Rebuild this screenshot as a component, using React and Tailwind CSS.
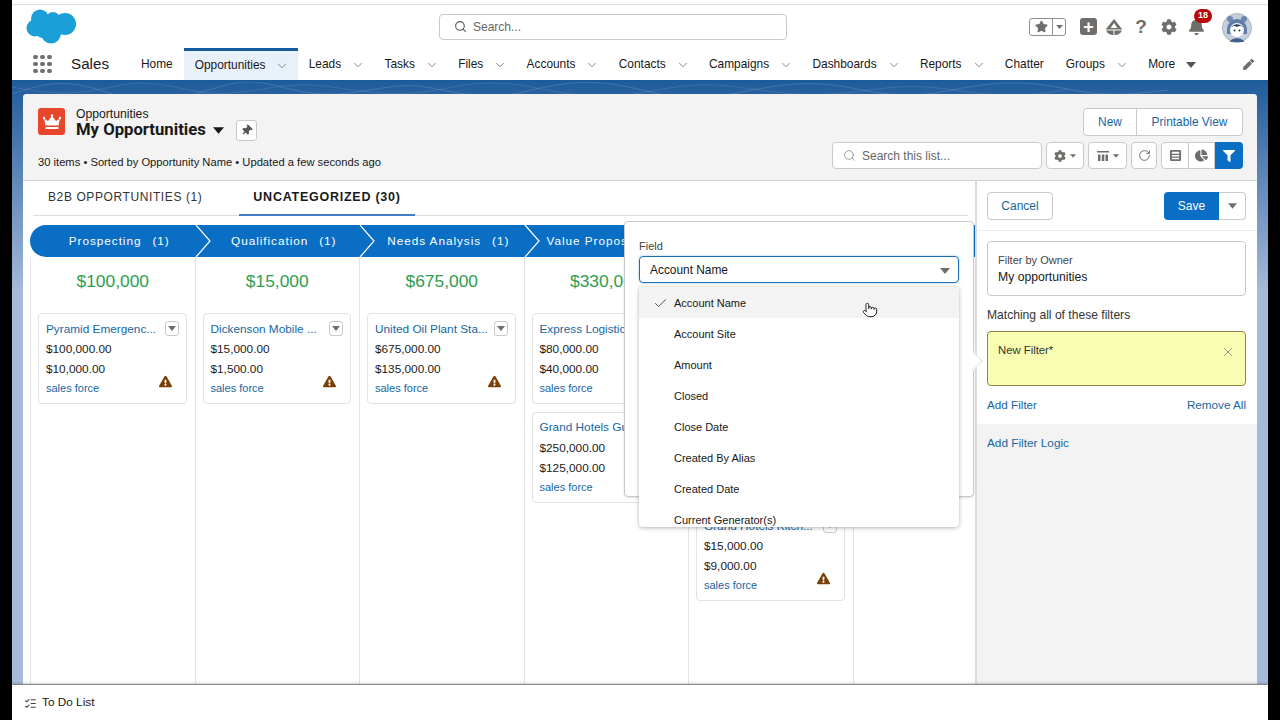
import React from "react";
import { ChevronDown, Search, RotateCw, Check, X, Pointer, ListChecks } from "lucide-react";
import { FaCog, FaBell, FaPen, FaThumbtack, FaChartPie, FaFilter, FaStar, FaExclamationTriangle } from "react-icons/fa";

const navItems = [
  { label: "Home" },
  { label: "Opportunities", menu: true, active: true },
  { label: "Leads", menu: true },
  { label: "Tasks", menu: true },
  { label: "Files", menu: true },
  { label: "Accounts", menu: true },
  { label: "Contacts", menu: true },
  { label: "Campaigns", menu: true },
  { label: "Dashboards", menu: true },
  { label: "Reports", menu: true },
  { label: "Chatter" },
  { label: "Groups", menu: true },
];

const stages = [
  {
    name: "Prospecting",
    count: 1,
    total: "$100,000",
    cards: [{ title: "Pyramid Emergenc...", amount: "$100,000.00", sub: "$10,000.00" }],
  },
  {
    name: "Qualification",
    count: 1,
    total: "$15,000",
    cards: [{ title: "Dickenson Mobile ...", amount: "$15,000.00", sub: "$1,500.00" }],
  },
  {
    name: "Needs Analysis",
    count: 1,
    total: "$675,000",
    cards: [{ title: "United Oil Plant Sta...", amount: "$675,000.00", sub: "$135,000.00" }],
  },
  {
    // the popover hides the rest of this label
    name: "Value Propos",
    clipped: true,
    total: "$330,000",
    cards: [
      { title: "Express Logistics...", amount: "$80,000.00", sub: "$40,000.00" },
      { title: "Grand Hotels Gu...", amount: "$250,000.00", sub: "$125,000.00" },
    ],
  },
  {
    // this column sits behind the field popover, only the last card shows
    name: "",
    total: "",
    cards: [
      { id: "a" },
      { id: "b" },
      { title: "Grand Hotels Kitch...", amount: "$15,000.00", sub: "$9,000.00" },
    ],
  },
];

const fields = [
  "Account Name",
  "Account Site",
  "Amount",
  "Closed",
  "Close Date",
  "Created By Alias",
  "Created Date",
  "Current Generator(s)",
];

function Caret({ className }) {
  return (
    <svg viewBox="0 0 10 6" className={className}>
      <path d="M0 0h10L5 6z" fill="currentColor" />
    </svg>
  );
}

function Cloud() {
  return (
    <svg viewBox="0 0 50 35" className="w-[50px] h-[35px]">
      <g fill="#1b9fd9">
        <circle cx="14" cy="9.500" r="9" />
        <circle cx="27" cy="10" r="7" />
        <circle cx="39" cy="15" r="11" />
        <circle cx="9" cy="19" r="8.500" />
        <circle cx="25" cy="24.500" r="10" />
        <circle cx="17" cy="21" r="8" />
        <rect x="10" y="10" width="30" height="14" />
      </g>
    </svg>
  );
}

function Waffle() {
  const dots = [0, 1, 2, 3, 4, 5, 6, 7, 8];
  return (
    <div className="grid grid-cols-3 gap-[2.500px] w-[19px]">
      {dots.map((d) => (
        <span key={d} className="w-[4.500px] h-[4.500px] rounded-full bg-[#706e6b]" />
      ))}
    </div>
  );
}

function Avatar() {
  return (
    <svg viewBox="0 0 30 30" className="w-[30px] h-[30px]">
      <circle cx="15" cy="15" r="14.500" fill="#c5cfdc" stroke="#a9b5c6" />
      <circle cx="8" cy="6" r="3" fill="#6d87ad" />
      <circle cx="22" cy="6" r="3" fill="#6d87ad" />
      <path d="M5 16a10 10 0 0 1 20 0v5H5z" fill="#5f7da8" />
      <circle cx="15" cy="17" r="7" fill="#fff" />
      <path d="M9 15c2-3 4-2 6-1 2-1 4-2 6 1-2-5-10-5-12 0z" fill="#2c3e5c" />
      <circle cx="12.500" cy="17.500" r="1" fill="#16325c" />
      <circle cx="17.500" cy="17.500" r="1" fill="#16325c" />
      <path d="M8 29c1-5 13-5 14 0z" fill="#3f5f8f" />
    </svg>
  );
}

function Trailhead() {
  return (
    <svg viewBox="0 0 18 18" className="w-[18px] h-[18px]">
      <path d="M9 1 1 11c0 4 4 6 8 6s8-2 8-6z" fill="#706e6b" />
      <path d="M9 5 5.500 10h7zM1 11.500h16v1H1zM8.500 12h1v5h-1z" fill="#fff" />
    </svg>
  );
}

function Crown() {
  return (
    <svg viewBox="0 0 20 20" className="w-[20px] h-[20px]">
      <path d="M2 6.500 6 9l4-5 4 5 4-2.500-1.500 7h-13z" fill="#fff" />
      <circle cx="2" cy="6" r="1.200" fill="#fff" />
      <circle cx="10" cy="3.500" r="1.200" fill="#fff" />
      <circle cx="18" cy="6" r="1.200" fill="#fff" />
      <rect x="3.500" y="15" width="13" height="2" fill="#fff" />
    </svg>
  );
}

function Contours() {
  return (
    <svg viewBox="0 0 1256 14" preserveAspectRatio="none" className="absolute left-0 top-0 w-[1256px] h-[14px]">
      <path
        d="M0 12c40-14 60-14 100 0s70 4 110-8 60 6 100 8 70-14 110-6 60 12 100 2 70-10 110 0 60 10 100 2 70-12 110-4 60 10 100 2 70-10 110-2 60 8 106 2"
        fill="none"
        stroke="#fff"
        strokeOpacity="0.14"
      />
      <path
        d="M0 5c50 10 70 6 110-2s70 12 110 8 60-12 100-6 70 10 110 2 60-8 100 0 70 10 110 2 60-8 100-2 70 8 110 2 60-6 100 0 70 6 106-2"
        fill="none"
        stroke="#fff"
        strokeOpacity="0.1"
      />
    </svg>
  );
}

function NavItem({ item }) {
  return (
    <div
      className={`h-full flex items-center pl-[11px] ${item.menu ? "pr-[8.300px]" : "pr-[11px]"} ${
        item.active ? "bg-[#e8f1fa] border-t-[3px] border-[#145c9e]" : "pt-[2px]"
      }`}
    >
      <span className="w-max">{item.label}</span>
      {item.menu && <ChevronDown className="ml-[10px] w-[14px] h-[14px] text-[#555]" strokeWidth={1.200} />}
    </div>
  );
}

function OpportunityCard({ card }) {
  if (!card.title) {
    return <div className="ml-[7px] mr-[8px] h-[91px] border border-[#e2e2e2] rounded-[4px] bg-white" />;
  }
  return (
    <div className="ml-[7px] mr-[8px] h-[91px] border border-[#e2e2e2] rounded-[4px] bg-white pl-[7px] pr-[7px] pt-[7px] text-[11.800px] leading-[20px] text-[#1a1a1a]">
      <div className="flex items-center justify-between h-[15px] mb-[3px]">
        <span className="text-[#17669f] text-[11.800px] whitespace-nowrap">{card.title}</span>
        <span className="w-[14px] h-[15px] shrink-0 border border-[#c9c9c9] rounded-[3px] flex items-center justify-center">
          <Caret className="w-[8px] h-[5px] text-[#706e6b]" />
        </span>
      </div>
      <div>{card.amount}</div>
      <div>{card.sub}</div>
      <div className="flex items-start justify-between pr-[7px] leading-[18px]">
        <span className="text-[#17669f] text-[11px]">sales force</span>
        <FaExclamationTriangle className="w-[13px] h-[13px] text-[#7a3f07] -mt-[4px]" />
      </div>
    </div>
  );
}

function Column({ stage }) {
  return (
    <div className="w-[164.500px] shrink-0 border-l border-[#e4e4e4]">
      <div className="h-[24px] text-[17.400px] leading-[24px] text-center text-[#2e9e4f] mt-[12px] mb-[20px]">{stage.total}</div>
      <div className="flex flex-col gap-[7.500px]">
        {stage.cards.map((c) => (
          <OpportunityCard key={c.title || c.id} card={c} />
        ))}
      </div>
    </div>
  );
}

function PathBar() {
  return (
    <div className="relative h-[32px] ml-[7px] bg-[#0b6ec5] rounded-l-full flex text-white text-[11.800px] tracking-[0.08em] overflow-hidden">
      {stages.map((s) => (
        <div
          key={s.name || "hidden"}
          className={`w-[164.500px] shrink-0 relative flex items-center gap-[11px] whitespace-nowrap pt-[1px] ${
            s.clipped ? "pl-[23px]" : "justify-center pl-[14px]"
          }`}
        >
          {s.name && <span>{s.name}</span>}
          {s.count && <span>({s.count})</span>}
          <svg viewBox="0 0 16 32" className="absolute right-[-16px] top-0 w-[16px] h-[32px] z-10">
            <path d="M1 0 15 16 1 32" fill="none" stroke="#fff" strokeWidth="1.200" />
          </svg>
        </div>
      ))}
    </div>
  );
}

function FieldPopover() {
  return (
    <div className="absolute left-[601px] top-[40px] w-[350px] h-[276px] bg-white border border-[#c9c9c9] rounded-[4px] shadow-sm z-20">
      <div className="pl-[14px] pr-[14px] pt-[17px]">
        <div className="text-[11px] leading-[14px] text-[#444] mb-[3px]">Field</div>
        <div className="h-[27px] w-[320px] border border-[#1b6fb8] rounded-[4px] flex items-center justify-between pl-[10px] pr-[8px] text-[11.900px] pt-[2px] shadow-[0_0_2px_#7fb2dd]">
          <span>Account Name</span>
          <Caret className="w-[10px] h-[6px] text-[#706e6b]" />
        </div>
      </div>
      <div className="absolute left-[14px] top-[65px] w-[320px] h-[240px] bg-white rounded-b-[4px] shadow-[0_1px_4px_rgba(0,0,0,0.3)] overflow-hidden text-[11px]">
        {fields.map((f, i) => (
          <div
            key={f}
            className={`h-[31px] flex items-center pl-[35px] pt-[2px] relative ${i === 0 ? "bg-[#f3f3f3]" : ""}`}
          >
            {i === 0 && <Check className="absolute left-[14px] w-[15px] h-[15px] text-[#444]" strokeWidth={1.500} />}
            {f}
          </div>
        ))}
      </div>
      <Pointer className="absolute left-[237px] top-[79px] w-[16px] h-[18px] z-30 text-[#222] fill-white" strokeWidth={1.500} />
      <div className="absolute right-[-7px] top-[132px] w-[14px] h-[14px] bg-white rotate-45 border-t border-r border-[#e5e5e5]" />
    </div>
  );
}

function FilterPanel() {
  return (
    <div className="w-[282px] shrink-0 border-l-2 border-[#dddddd] bg-[#f3f3f3] flex flex-col text-[12px]">
      <div className="bg-white h-[243px] flex flex-col">
        <div className="h-[50px] border-b border-[#eeeeee] flex items-center justify-between pl-[10px] pr-[11px] shrink-0">
          <button className="w-[66px] h-[28px] border border-[#c9c9c9] rounded-[4px] text-[#17669f]">Cancel</button>
          <div className="flex h-[28px]">
            <button className="w-[55px] bg-[#0b6ec5] text-white rounded-l-[4px]">Save</button>
            <span className="w-[27px] border border-l-0 border-[#c9c9c9] rounded-r-[4px] flex items-center justify-center">
              <Caret className="w-[9px] h-[6px] text-[#706e6b]" />
            </span>
          </div>
        </div>
        <div className="pl-[10px] pr-[11px] pt-[10px]">
          <div className="h-[55px] border border-[#c9c9c9] rounded-[4px] px-[10px] pt-[10px] leading-[17px]">
            <div className="text-[11px] text-[#444]">Filter by Owner</div>
            <div className="text-[12.200px] text-[#1a1a1a]">My opportunities</div>
          </div>
          <div className="mt-[11px] text-[12.100px] leading-[16px] text-[#333]">Matching all of these filters</div>
          <div className="mt-[8px] h-[55px] bg-[#f9fdb1] border border-[#8f8449] rounded-[4px] pl-[10px] pr-[10px] pt-[10px] flex justify-between text-[11.300px] text-[#333]">
            <span>New Filter*</span>
            <X className="w-[14px] h-[14px] text-[#888] mt-[3px]" strokeWidth={1.500} />
          </div>
          <div className="mt-[10px] flex justify-between text-[11.700px] text-[#17669f]">
            <span>Add Filter</span>
            <span>Remove All</span>
          </div>
        </div>
      </div>
      <div className="pl-[10px] pt-[11px] text-[11.800px] text-[#17669f]">Add Filter Logic</div>
    </div>
  );
}

export default function App() {
  return (
    <div className="h-[720px] w-[1280px] overflow-hidden flex bg-black text-[#181818] text-[11.900px]" style={{ fontFamily: '"Liberation Sans", Arial, sans-serif' }}>
      <div className="w-[1256px] ml-[12px] flex flex-col bg-white">
        <div className="h-[5px] shrink-0 border-b border-[#dedede]" />

        {/* top bar */}
        <div className="h-[43px] shrink-0 flex items-center pl-[14px] pr-[16px]">
          <Cloud />
          <div className="ml-[363px] w-[348px] h-[26px] border border-[#c9c9c9] rounded-[4px] flex items-center pl-[14px] text-[#666] text-[12px]">
            <Search className="w-[13px] h-[13px] mr-[6px] text-[#555]" strokeWidth={2} />
            Search...
          </div>
          <div className="ml-auto flex items-center text-[#706e6b]">
            <div className="flex h-[18px] w-[37px] border border-[#8f8f8f] rounded-[3px]">
              <span className="w-[23px] border-r border-[#8f8f8f] flex items-center justify-center">
                <FaStar className="w-[13px] h-[13px]" />
              </span>
              <span className="flex-1 flex items-center justify-center">
                <Caret className="w-[7px] h-[4px]" />
              </span>
            </div>
            <span className="ml-[14px] w-[17px] h-[17px] rounded-[3px] bg-[#706e6b] text-white flex items-center justify-center text-[18px] leading-none font-bold">+</span>
            <span className="ml-[8px]"><Trailhead /></span>
            <span className="ml-[12px] w-[12px] text-[19px] leading-none font-bold text-center">?</span>
            <FaCog className="ml-[14px] w-[16px] h-[16px]" />
            <span className="relative ml-[11px]">
              <FaBell className="w-[17px] h-[17px]" />
              <span className="absolute left-[6px] -top-[9px] w-[18px] h-[14px] rounded-full bg-[#b80707] text-white text-[9px] font-bold flex items-center justify-center">18</span>
            </span>
            <span className="ml-[17px] mt-[2px]"><Avatar /></span>
          </div>
        </div>

        {/* nav */}
        <div className="h-[32px] shrink-0 flex items-center pl-[21px] pr-[14px]">
          <Waffle />
          <span className="ml-[19px] w-[48px] text-[15.200px] pt-[1px]">Sales</span>
          <div className="ml-[11px] h-full flex items-center">
            {navItems.map((item) => (
              <NavItem key={item.label} item={item} />
            ))}
            <div className="flex items-center pl-[11px] pt-[2px]">
              More
              <Caret className="ml-[11px] w-[10px] h-[6px] text-[#555]" />
            </div>
          </div>
          <FaPen className="ml-auto w-[11px] h-[11px] text-[#706e6b]" />
        </div>

        {/* page */}
        <div className="relative flex-1 min-h-0 border-t-2 border-[#1a5b9c] px-[11px] pt-[12px] bg-gradient-to-b from-[#1f5c9b] to-[#a6bbd9] to-[35%] flex flex-col">
          <Contours />
          <div className="relative flex-1 min-h-0 rounded-t-[4px] bg-white flex flex-col overflow-hidden">
            <div className="h-[87px] shrink-0 bg-[#f3f3f3] border-b border-[#d4d4d4] pl-[15px] pr-[14px] pt-[14px] flex justify-between">
              <div>
                <div className="flex items-start">
                  <span className="w-[27px] h-[27px] rounded-[3px] bg-[#e8452d] flex items-center justify-center">
                    <Crown />
                  </span>
                  <div className="ml-[11px] -mt-[1px]">
                    <div className="text-[12.200px] leading-[15px]">Opportunities</div>
                    <div className="flex items-center h-[20px] -mt-[2px]">
                      <span className="text-[16.700px] font-bold leading-[20px]" style={{ fontFamily: "Roboto, sans-serif" }}>My Opportunities</span>
                      <Caret className="ml-[7px] w-[11px] h-[7px]" />
                      <span className="ml-[12px] w-[21px] h-[21px] bg-white border border-[#c9c9c9] rounded-[3px] flex items-center justify-center">
                        <FaThumbtack className="w-[11px] h-[11px] text-[#555] rotate-45" />
                      </span>
                    </div>
                  </div>
                </div>
                <div className="mt-[15px] text-[11.200px] leading-[14px] whitespace-nowrap">
                  30 items • Sorted by Opportunity Name • Updated a few seconds ago
                </div>
              </div>
              <div className="flex flex-col items-end">
                <div className="flex h-[28px] bg-white border border-[#c9c9c9] rounded-[4px] text-[#17669f] text-[11.900px]">
                  <span className="w-[53px] border-r border-[#c9c9c9] flex items-center justify-center pt-[1px]">New</span>
                  <span className="w-[105px] flex items-center justify-center pt-[1px]">Printable View</span>
                </div>
                <div className="mt-[6px] flex h-[27px] gap-[4px] text-[#706e6b]">
                  <div className="w-[210px] bg-white border border-[#c9c9c9] rounded-[4px] flex items-center pl-[10px] text-[12px] text-[#666]">
                    <Search className="w-[13px] h-[13px] mr-[6px] text-[#888]" strokeWidth={1.500} />
                    Search this list...
                  </div>
                  <span className="w-[38px] bg-white border border-[#c9c9c9] rounded-[4px] flex items-center justify-center gap-[4px]">
                    <FaCog className="w-[12px] h-[12px]" />
                    <Caret className="w-[6px] h-[4px]" />
                  </span>
                  <span className="w-[39px] bg-white border border-[#c9c9c9] rounded-[4px] flex items-center justify-center gap-[3px]">
                    <svg viewBox="0 0 14 14" className="w-[14px] h-[14px]">
                      <path d="M1 2h12v1.500H1zM2 5.500h2.500V12H2zM5.800 5.500h2.500V12H5.800zM9.500 5.500H12V12H9.500z" fill="currentColor" />
                    </svg>
                    <Caret className="w-[6px] h-[4px]" />
                  </span>
                  <span className="w-[26px] bg-white border border-[#c9c9c9] rounded-[4px] flex items-center justify-center">
                    <RotateCw className="w-[13px] h-[13px]" strokeWidth={1.800} />
                  </span>
                  <div className="flex">
                    <span className="w-[28px] bg-white border border-[#c9c9c9] rounded-l-[4px] flex items-center justify-center">
                      <svg viewBox="0 0 14 14" className="w-[13px] h-[13px]">
                        <path d="M2.500 1h9A1.500 1.500 0 0 1 13 2.500v9a1.500 1.500 0 0 1-1.500 1.500h-9A1.500 1.500 0 0 1 1 11.500v-9A1.500 1.500 0 0 1 2.500 1zm.5 2v2h8V3zm0 3.500v1.500h8V6.500zM3 9.500V11h8V9.500z" fill="currentColor" fillRule="evenodd" />
                      </svg>
                    </span>
                    <span className="w-[26px] bg-white border-y border-r border-[#c9c9c9] flex items-center justify-center">
                      <FaChartPie className="w-[13px] h-[13px]" />
                    </span>
                    <span className="w-[28px] bg-[#0b6ec5] rounded-r-[4px] flex items-center justify-center">
                      <FaFilter className="w-[12px] h-[12px] text-white" />
                    </span>
                  </div>
                </div>
              </div>
            </div>

            <div className="flex-1 min-h-0 flex">
              <div className="relative flex-1 min-w-0">
                <div className="ml-[10px] mr-[7px] h-[35px] border-b border-[#dddddd] flex text-[12px] tracking-[0.05em] leading-[32px] whitespace-nowrap">
                  <span className="pl-[15px] w-[206px] text-[#333]">B2B OPPORTUNITIES (1)</span>
                  <span className="w-[176px] text-center text-[12.500px] tracking-[0.06em] font-bold border-b-2 border-[#3f80c4] h-[35px]">UNCATEGORIZED (30)</span>
                </div>
                <div className="mt-[9px]">
                  <PathBar />
                </div>
                <div className="ml-[7px] flex h-[427px] overflow-hidden">
                  {stages.map((s, i) => (
                    <Column key={i} stage={s} />
                  ))}
                  <div className="flex-1 border-l border-[#e4e4e4]" />
                </div>
                <FieldPopover />
              </div>
              <FilterPanel />
            </div>
          </div>
        </div>

        {/* utility bar */}
        <div className="h-[36px] shrink-0 border-t border-[#8a8a8a] bg-white flex items-center pl-[12px] pt-[1px] text-[11.800px] shadow-[0_-1px_2px_rgba(0,0,0,0.2)] z-30">
          <ListChecks className="w-[13px] h-[13px] mr-[5px] text-[#444]" strokeWidth={2} />
          To Do List
        </div>
      </div>
    </div>
  );
}
